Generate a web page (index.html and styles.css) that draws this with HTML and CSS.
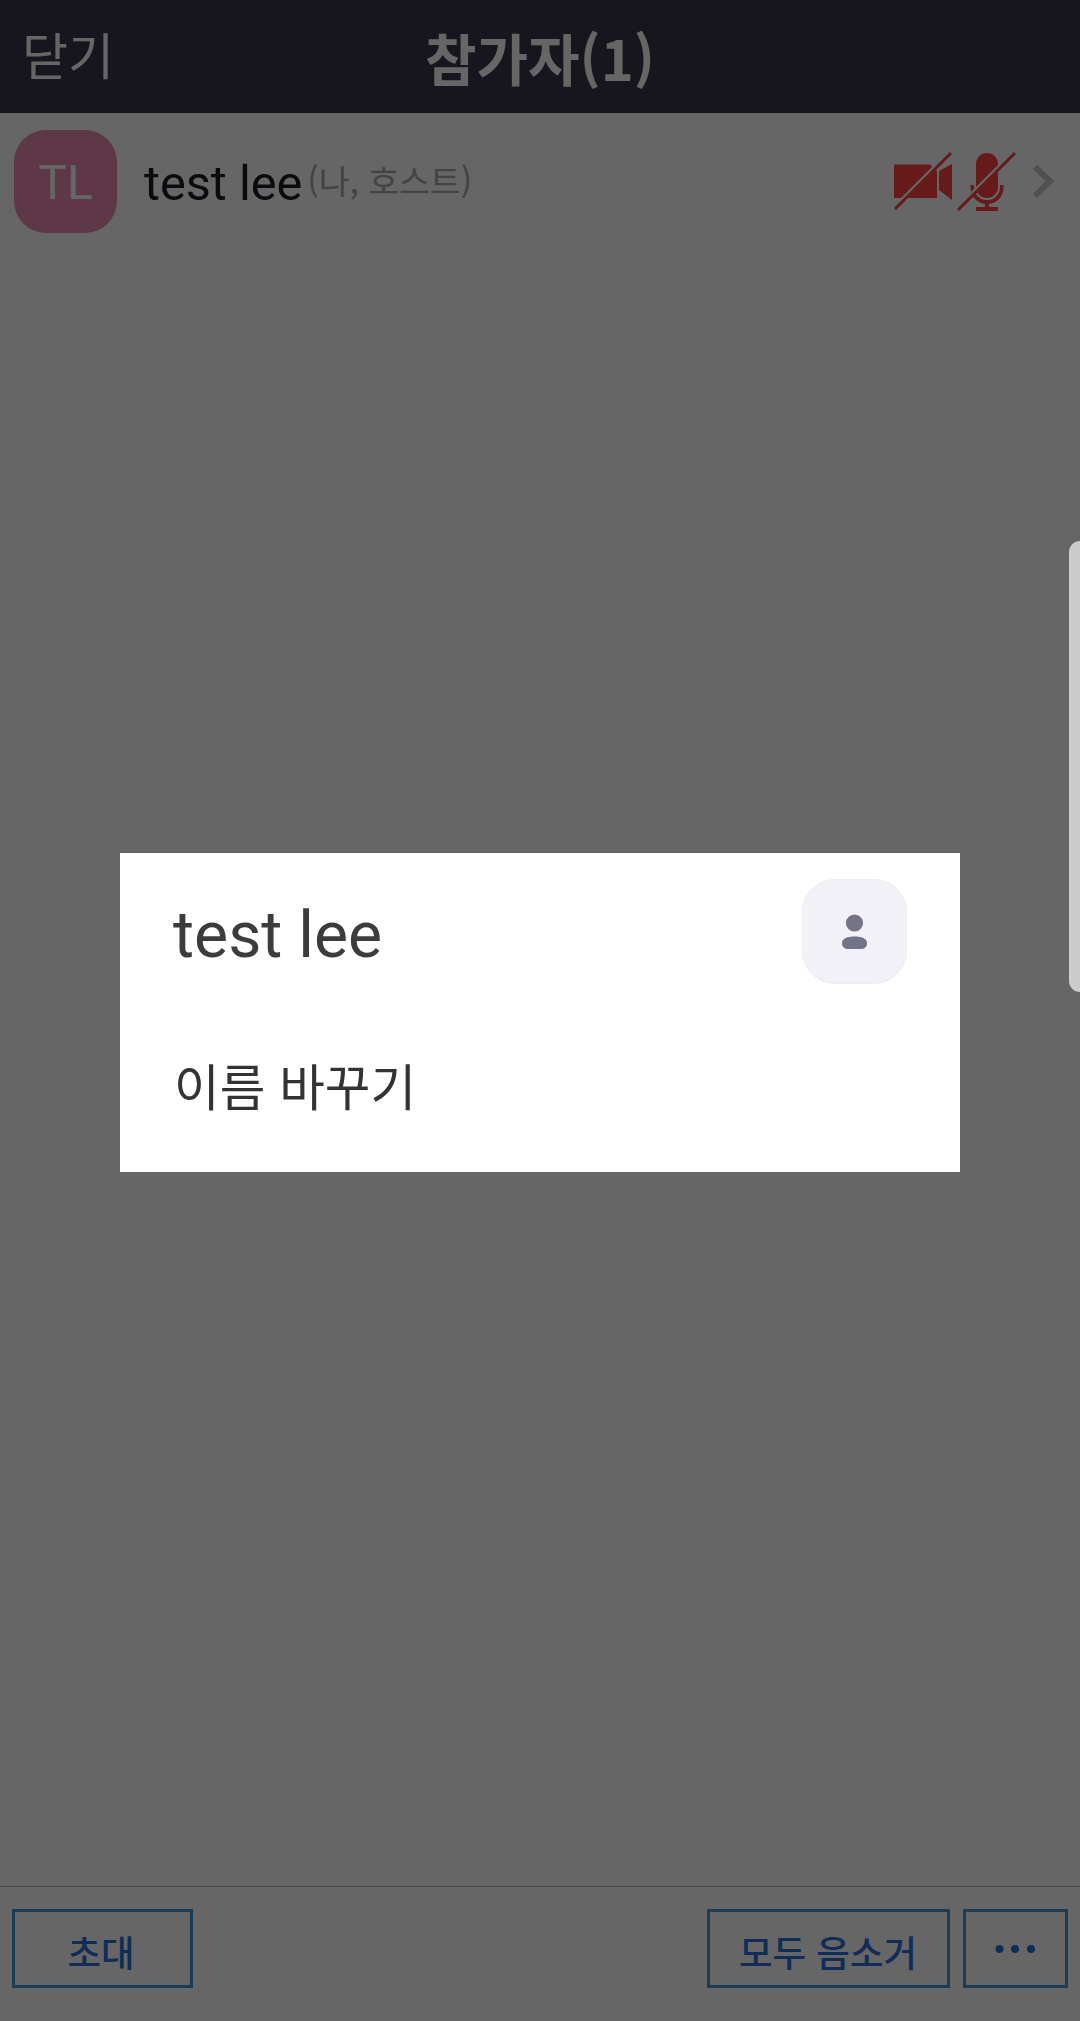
FILE: index.html
```html
<!DOCTYPE html>
<html lang="ko">
<head>
<meta charset="utf-8">
<title>참가자</title>
<link rel="stylesheet" href="styles.css">
</head>
<body>
<div class="screen">
  <header class="topbar">
    <span class="close">닫기</span>
    <h1 class="title">참가자(1)</h1>
    <span></span>
  </header>
  <main class="list">
    <div class="row">
      <div class="avatar">TL</div>
      <span class="name">test lee</span>
      <span class="role">(나, 호스트)</span>
      <svg class="status" width="170" height="70" viewBox="885 145 170 70">
        <path class="red" d="M894 163.500H930L937 170V197H894ZM939 170L952 163V199L939 189Z"/>
        <path class="mic" d="M972.500 184V186C972.500 206 1001.500 206 1001.500 186V184M987 200V208M976 208H998"/>
        <rect class="red capsule" x="975" y="151" width="24" height="47" rx="12"/>
        <path class="gap" d="M894 206L949 151M958 206L1013 151"/>
        <path class="slash" d="M895 208L951 152M958 209L1015 152"/>
        <path class="chevron" d="M1035 166L1050 180L1035 195"/>
      </svg>
    </div>
  </main>
  <footer class="bottombar">
    <div class="btn invite">초대</div>
    <div class="btn mute">모두 음소거</div>
    <div class="btn more">
      <svg width="44" height="10" viewBox="0 0 44 10"><circle cx="5.500" cy="5" r="4"/><circle cx="21" cy="5" r="4"/><circle cx="37" cy="5" r="4"/></svg>
    </div>
  </footer>
</div>
<div class="scrim">
  <section class="dialog">
    <div class="dialog-head">
      <h2 class="dialog-name">test lee</h2>
      <div class="person">
        <svg width="26" height="36" viewBox="0 0 26 36"><circle cx="12.500" cy="9" r="8.600"/><path d="M0 29C0 24.500 5.500 22.500 12.500 22.500S25 24.500 25 29C25 33 22.500 35 18.500 35H6.500C2.500 35 0 33 0 29Z"/></svg>
      </div>
    </div>
    <div class="rename">이름 바꾸기</div>
  </section>
</div>
<div class="edge-handle"></div>
</body>
</html>
```

FILE: styles.css
```css
* { box-sizing: border-box; }
body {
  margin: 0;
  width: 1080px;
  height: 2021px;
  position: relative;
  overflow: hidden;
  background: #fff;
  font-family: Roboto, "Noto Sans CJK KR", sans-serif;
}
h1, h2 { margin: 0; }
.screen { height: 100%; display: flex; flex-direction: column; }
.topbar {
  height: 113px;
  flex: none;
  display: grid;
  grid-template-columns: 1fr auto 1fr;
  align-items: center;
  padding: 0 22px;
  background: #3a364b;
  color: #fff;
  font-family: "Noto Sans CJK KR", sans-serif;
}
.close { font-size: 50px; line-height: 60px; padding-bottom: 7px; }
.title { font-size: 56px; font-weight: 700; line-height: 60px; }
.list { flex: 1; }
.row {
  height: 136px;
  display: flex;
  align-items: center;
  padding: 1px 25px 0 14px;
  border-bottom: 1px solid #f8f8f8;
}
.avatar {
  width: 103px;
  height: 103px;
  border-radius: 32px;
  padding-top: 3px;
  background: #eb8cb0;
  color: #fff;
  font-size: 48px;
  display: flex;
  align-items: center;
  justify-content: center;
}
.name { margin-left: 27px; padding-top: 4px; font-size: 48.700px; color: #1c1c26; }
.role {
  margin-left: 5px;
  padding-bottom: 3px;
  font-family: "Noto Sans CJK KR", sans-serif;
  font-size: 33.500px;
  color: #a8a8a8;
}
.status { margin-left: auto; }
.red { fill: #ff4242; }
.capsule { stroke: #fff; stroke-width: 2; }
.mic { fill: none; stroke: #ff4242; stroke-width: 4; }
.gap { stroke: #fff; stroke-width: 3; }
.slash { stroke: #ff4242; stroke-width: 3; }
.chevron { fill: none; stroke: #c8c8c8; stroke-width: 6; }
.bottombar {
  height: 135px;
  flex: none;
  display: flex;
  align-items: flex-start;
  gap: 13px;
  padding: 22px 12px 0;
  border-top: 1px solid #b4b4b4;
}
.btn {
  height: 79px;
  display: flex;
  align-items: center;
  justify-content: center;
  border: 3px solid #4596d2;
  color: #2a72dc;
  font-family: "Noto Sans CJK KR", sans-serif;
  font-size: 36.500px;
  font-weight: 500;
}
.btn svg { fill: #2a72dc; }
.invite { width: 181px; padding: 5px 3px 0 0; }
.mute { width: 243px; margin-left: auto; padding: 5px 1px 0 0; }
.more { width: 105px; }
.scrim {
  position: absolute;
  inset: 0;
  display: flex;
  justify-content: center;
  align-items: flex-start;
  padding-top: 853px;
  background: rgba(0, 0, 0, .6);
}
.dialog { width: 840px; height: 319px; padding: 26px 53px 0; background: #fff; }
.dialog-head { display: flex; justify-content: space-between; align-items: center; }
.dialog-name { padding-top: 7px; font-size: 64.300px; font-weight: 400; color: #3c3c3c; }
.person {
  width: 105px;
  height: 105px;
  display: flex;
  align-items: center;
  justify-content: center;
  border: 1px solid #ececf2;
  border-radius: 33px;
  background: #f2f1f7;
}
.person svg { fill: #747487; }
.rename { margin: 65px 0 0 1px; font: 49.600px/70px "Noto Sans CJK KR", sans-serif; color: #333; }
.edge-handle {
  position: absolute;
  right: 0;
  top: 541px;
  width: 11px;
  height: 451px;
  border-radius: 14px 0 0 14px;
  background: #ccc;
}
```
